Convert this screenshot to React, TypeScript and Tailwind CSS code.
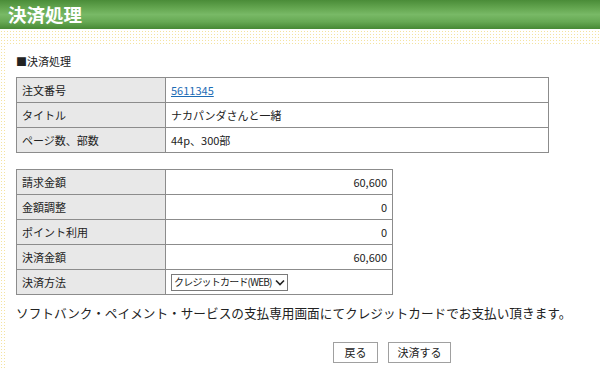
import React from "react";

const detailRows = [
  { label: "注文番号", value: "5611345", link: true },
  { label: "タイトル", value: "ナカパンダさんと一緒" },
  { label: "ページ数、部数", value: "44p、300部" },
];

const amountRows = [
  { label: "請求金額", value: "60,600" },
  { label: "金額調整", value: "0" },
  { label: "ポイント利用", value: "0" },
  { label: "決済金額", value: "60,600" },
];

const labelCell =
  "h-[25px] border border-[#8c8c8c] bg-[#e8e8e8] px-[5px] py-0 text-left font-normal";
const valueCell = "h-[25px] border border-[#8c8c8c] bg-white px-[5px] py-0";

const App: React.FC = () => {
  return (
    <div
      className="w-[600px] h-[370px] overflow-hidden bg-white bg-[radial-gradient(circle,#f4e3a0_0.8px,transparent_1px)] bg-[length:3px_3px] text-[#222]"
      style={{ fontFamily: '"Noto Sans CJK JP", "Liberation Sans", sans-serif' }}
    >
      {/* Page header */}
      <div className="h-[29px] bg-[linear-gradient(#4a8c38,#66a852_30%,#78b966_50%,#67a954_75%,#468834)] pl-[8px] flex items-center">
        <h1 className="text-[18.5px] font-bold leading-none text-white">決済処理</h1>
      </div>

      {/* Content panel */}
      <div className="mt-[15px] ml-[6px] h-[326px] bg-white pl-[10px] pt-[9px]">
        <p className="text-[11px] leading-[16px]">■決済処理</p>

        <table className="mt-[8px] w-[533px] border-collapse text-[11px] leading-[14px]">
          <tbody>
            {detailRows.map((row) => (
              <tr key={row.label}>
                <th className={`${labelCell} w-[149px]`}>{row.label}</th>
                <td className={valueCell}>
                  {row.link ? (
                    <a href="#" className="text-[#1d6cb5] underline">
                      {row.value}
                    </a>
                  ) : (
                    row.value
                  )}
                </td>
              </tr>
            ))}
          </tbody>
        </table>

        <table className="mt-[16px] w-[377px] border-collapse text-[11px] leading-[14px]">
          <tbody>
            {amountRows.map((row) => (
              <tr key={row.label}>
                <th className={`${labelCell} w-[149px]`}>{row.label}</th>
                <td className={`${valueCell} text-right`}>{row.value}</td>
              </tr>
            ))}
            <tr>
              <th className={labelCell}>決済方法</th>
              <td className={valueCell}>
                <div className="flex h-[17px] w-[117px] items-center border border-[#7a7a7a] bg-white pl-[2px] pr-[2px] text-[10px] leading-none">
                  <span className="flex-1 whitespace-nowrap tracking-[-0.8px]">
                    クレジットカード(WEB)
                  </span>
                  <svg width="10" height="7" viewBox="0 0 10 7" className="ml-[1px] shrink-0">
                    <path d="M1 1.5 L5 5.5 L9 1.5" fill="none" stroke="#222" strokeWidth="1.6" />
                  </svg>
                </div>
              </td>
            </tr>
          </tbody>
        </table>

        <p className="mt-[10px] whitespace-nowrap text-[12.65px] leading-[16px]">
          ソフトバンク・ペイメント・サービスの支払専用画面にてクレジットカードでお支払い頂きます。
        </p>

        <div className="mt-[21px] flex gap-[10px] pl-[317px]">
          <button className="h-[21px] w-[45px] border border-[#a0a0a0] bg-white text-[11px] leading-none">
            戻る
          </button>
          <button className="h-[21px] w-[63px] border border-[#a0a0a0] bg-white text-[11px] leading-none">
            決済する
          </button>
        </div>
      </div>
    </div>
  );
};

export default App;
